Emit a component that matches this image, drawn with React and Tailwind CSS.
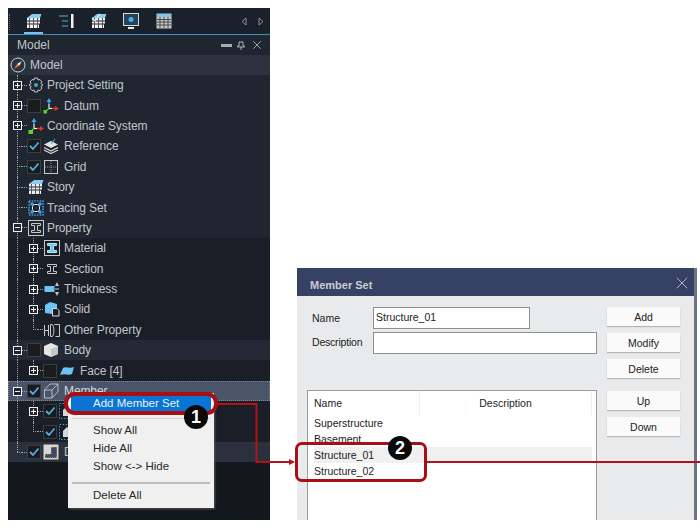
import { X } from "lucide-react";

function Floors({ check }) {
  return (
    <svg width="16" height="16" viewBox="0 0 16 16" fill="none">
      <path d="M1 5 L6 1 H15.5 L14 5 Z" fill="#86ccf4" />
      <path d="M1 5 H14 V7.5 H1 Z M1 8.5 H14 V10.5 H1 Z M1 11.5 H13 V15 H1 Z" fill="#f0f0f0" />
      <path d="M3.5 5 V15 M7.5 5 V15 M11.5 5 V15" stroke="#555" strokeWidth="1" />
      {check && <path d="M1 5 L4 8 L9 1" stroke="#dfe3e6" strokeWidth="1.4" />}
    </svg>
  );
}

function Axes({ small }) {
  return (
    <svg width="16" height="16" viewBox="0 0 16 16" fill="none">
      <path d="M6 10.5 V6" stroke="#f0f0f0" strokeWidth="1.2" />
      <path d="M6 6 V3" stroke="#35a9e6" strokeWidth="1.4" />
      <path d="M6 0 L3.5 4 H8.5 Z" fill="#35a9e6" />
      <path d="M6 10.5 H9" stroke="#f0f0f0" strokeWidth="1.2" />
      <path d="M9 10.5 H13" stroke="#e8352b" strokeWidth="1.4" />
      <path d="M16 10.5 L12 8 V13 Z" fill="#e8352b" />
      <path d="M6 10.5 L3 13" stroke="#58d030" strokeWidth="1.2" />
      <rect x="0.5" y="12" width={small ? 3.5 : 4.5} height={small ? 3.5 : 4} fill="#58d030" />
    </svg>
  );
}

function Gear() {
  return (
    <svg width="16" height="16" viewBox="0 0 16 16" fill="none">
      <path d="M6.5 1 H9.5 L10 3 L12 2.5 L14 5 L12.8 6.5 L15 8 L12.8 9.5 L14 11 L12 13.5 L10 13 L9.5 15 H6.5 L6 13 L4 13.5 L2 11 L3.2 9.5 L1 8 L3.2 6.5 L2 5 L4 2.5 L6 3 Z" stroke="#c4c8cc" strokeWidth="1" />
      <circle cx="8" cy="8" r="2" fill="#4a9fd6" />
    </svg>
  );
}

function RefIcon() {
  return (
    <svg width="16" height="16" viewBox="0 0 16 16" fill="none">
      <path d="M1 6.5 L8 3 L15 6.5 L8 10 Z" fill="#e4e4e4" />
      <path d="M1 9.5 L8 13 L15 9.5 M1 12 L8 15.5 L15 12" stroke="#d8d8d8" strokeWidth="1.2" />
      <path d="M8 6 L12 1" stroke="#35a9e6" strokeWidth="1.2" />
    </svg>
  );
}

function GridIcon() {
  return (
    <svg width="16" height="16" viewBox="0 0 16 16" fill="none">
      <rect x="1.5" y="1.5" width="13" height="13" stroke="#c8c8c8" />
      <path d="M8 2 V14 M2 8 H14" stroke="#8a8f94" strokeDasharray="1 1" />
    </svg>
  );
}

function Tracing() {
  return (
    <svg width="16" height="16" viewBox="0 0 16 16" fill="none">
      <rect x="1" y="1" width="14" height="14" stroke="#3fa4e6" strokeWidth="1.6" strokeDasharray="1.5 1.2" />
      <rect x="4.5" y="4.5" width="7" height="7" rx="2" stroke="#e4eef4" />
      <rect x="2.5" y="2.5" width="3" height="3" fill="#3fa4e6" />
      <rect x="10.5" y="2.5" width="3" height="3" fill="#3fa4e6" />
      <rect x="2.5" y="10.5" width="3" height="3" fill="#3fa4e6" />
      <rect x="10.5" y="10.5" width="3" height="3" fill="#3fa4e6" />
    </svg>
  );
}

function Beam({ fill, box }) {
  return (
    <svg width="16" height="16" viewBox="0 0 16 16" fill="none">
      {box && <rect x="0.5" y="0.5" width="15" height="15" stroke="#c8c8c8" />}
      <path d="M3.5 3.5 H12.5 V5.5 H9.5 V10.5 H12.5 V12.5 H3.5 V10.5 H6.5 V5.5 H3.5 Z" fill={fill || "none"} stroke={fill ? "#b8e8ff" : "#c8c8c8"} />
    </svg>
  );
}

function Thick() {
  return (
    <svg width="16" height="16" viewBox="0 0 16 16" fill="none">
      <rect x="0.5" y="5" width="10" height="6" fill="#6cc4f4" />
      <path d="M13 1 L15 5 H11 Z M13 15 L11 11 H15 Z" fill="#c8c8c8" />
      <path d="M11 8 H15" stroke="#c8c8c8" />
    </svg>
  );
}

function Solid() {
  return (
    <svg width="16" height="16" viewBox="0 0 16 16" fill="none">
      <path d="M1 4 L6 1 L13 3 V7 H8 V13 L1 12 Z" fill="#6cc4f4" />
      <path d="M8.5 7.5 H13 L15 9.5 V15 H8.5 Z" stroke="#dcdcdc" />
    </svg>
  );
}

function Other() {
  return (
    <svg width="16" height="16" viewBox="0 0 16 16" fill="none">
      <path d="M0.5 3 V14 M4.5 3 V14 M0.5 8.5 H4.5 M6.5 2.5 H8 C10.5 2.5 10.5 14.5 8 14.5 H6.5 Z M10.5 2.5 H15.5 V14.5 H11.5" stroke="#c8c8c8" />
    </svg>
  );
}

function BodyIcon() {
  return (
    <svg width="16" height="16" viewBox="0 0 16 16">
      <path d="M8 1 L15 4 V12 L8 15 L1 12 V4 Z" fill="#e6e6e6" />
      <path d="M8 7 L15 4 V12 L8 15 Z" fill="#c6c6c6" />
    </svg>
  );
}

function Face() {
  return (
    <svg width="16" height="16" viewBox="0 0 16 16">
      <path d="M4 5 C7 3 10 6 15 4 L13 11 C9 13 6 10 1 12 Z" fill="#6cc4f4" />
    </svg>
  );
}

function Wire() {
  return (
    <svg width="16" height="16" viewBox="0 0 16 16" fill="none">
      <path d="M1.5 7 L7 1 H15 V8.5 L9 15 H1.5 Z M1.5 7 H9 V15 M9 7 L15 1" stroke="#d0d3d6" strokeWidth="0.8" />
    </svg>
  );
}

function SetIcon() {
  return (
    <svg width="16" height="16" viewBox="0 0 16 16" fill="none">
      <rect x="0.5" y="0.5" width="15" height="15" stroke="#3f9ad6" strokeDasharray="1.5 1.5" />
      <path d="M4 7 L8 3 L12 7 V13 H4 Z" fill="#d8d8d8" />
    </svg>
  );
}

function Display() {
  return (
    <svg width="16" height="16" viewBox="0 0 16 16" fill="none">
      <rect x="0.5" y="0.5" width="15" height="15" fill="#d8d8d8" />
      <path d="M2 14 V10 H8 V3 H14 V14 Z" fill="#3a4a70" stroke="#d4c84a" strokeDasharray="1 1" />
    </svg>
  );
}

function Row({ level = 0, exp, check, icon, label, bg = "", main, sub, dim }) {
  return (
    <div className={`relative h-[20.4px] flex items-center ${bg}`}>
      {main && (
        <div
          className={`absolute left-[9px] w-0 border-l border-dotted border-[#a0a4a8] ${
            main === "end" ? "top-0 h-[10px]" : "top-0 bottom-0"
          }`}
        />
      )}
      {sub && (
        <div
          className={`absolute left-[25px] w-0 border-l border-dotted border-[#a0a4a8] ${
            sub === "end" ? "top-0 h-[10px]" : "top-0 bottom-0"
          }`}
        />
      )}
      <div className={level === 0 ? "w-[5px]" : "w-[21px]"} />
      <div className="relative w-[9px] h-[9px] flex items-center justify-center">
        {exp ? (
          <div className="relative z-10 w-[9px] h-[9px] border border-[#f0f0f0] bg-[#20262e] flex items-center justify-center">
            <div className="absolute w-[5px] h-px bg-[#f0f0f0]" />
            {exp === "+" && <div className="absolute h-[5px] w-px bg-[#f0f0f0]" />}
          </div>
        ) : (
          <div className="absolute left-[4px] right-0 border-t border-dotted border-[#a0a4a8]" />
        )}
      </div>
      <div className="w-[5px] border-t border-dotted border-[#a0a4a8]" />
      {check !== undefined && (
        <div className="w-[14px] h-[14px] mr-[2px] bg-[#1b1b1d] border border-[#3a3d42] flex items-center justify-center">
          {check && (
            <svg width="12" height="12" viewBox="0 0 12 12" fill="none">
              <path d="M2 6 L5 9 L10.5 2.5" stroke="#4ab0ea" strokeWidth="1.8" />
            </svg>
          )}
        </div>
      )}
      <div className={`w-4 h-4 shrink-0 ${check === undefined ? "ml-px" : ""}`}>{icon}</div>
      {label && (
        <span
          className={`${check !== undefined ? "ml-[5px]" : level === 1 ? "ml-1" : "ml-[3px]"} text-[12px] tracking-[-0.1px] leading-none whitespace-nowrap ${
            dim ? "text-[#d4d7da]" : "text-[#c0c4c9]"
          }`}
        >
          {label}
        </span>
      )}
    </div>
  );
}

function Btn({ children, className = "" }) {
  return (
    <div className={`w-[73px] h-[19px] pt-[2px] bg-[#fafafa] shadow-[0_1px_1px_#b4b6b8] flex items-center justify-center text-[10.5px] text-[#222] ${className}`}>
      {children}
    </div>
  );
}

export default function App() {
  return (
    <div className="relative w-[700px] h-[530px] bg-white flex items-start overflow-hidden font-['Liberation_Sans','Noto_Sans',sans-serif]">
      {/* Left panel: model tree */}
      <div className="ml-2 mt-2 w-[262px] h-[512px] bg-[#14181e] flex flex-col">
        {/* Toolbar */}
        <div className="relative h-[27px] bg-[#1b212a] border-b border-[#3d8fc4] flex items-center shrink-0">
          <div className="absolute left-px top-[6px] h-[16px] w-0 border-l border-dotted border-[#6a7078]" />
          <div className="flex items-center gap-[16.4px] pl-[18px]">
            <div className="relative">
              <Floors />
              <div className="absolute left-[-2px] top-[19px] w-[19px] h-[2px] bg-[#7cc4ee]" />
            </div>
            <svg width="16" height="16" viewBox="0 0 16 16" fill="none">
              <path d="M1 3 H10 M4 8 H10 M4 13 H10" stroke="#4ab0ea" strokeWidth="1.2" />
              <rect x="13" y="1" width="2.5" height="14" fill="#f0f0f0" />
            </svg>
            <Floors check />
            <svg width="16" height="16" viewBox="0 0 16 16" fill="none">
              <rect x="0.5" y="0.5" width="15" height="12" fill="#23435a" stroke="#d8d8d8" />
              <circle cx="8" cy="6.5" r="2.5" fill="#4ab0ea" />
              <path d="M5 15 H11" stroke="#e8e8e8" strokeWidth="2" />
            </svg>
            <svg width="16" height="16" viewBox="0 0 16 16" fill="none">
              <rect x="0.5" y="0.5" width="15" height="15" fill="#c8c8c8" />
              <rect x="1" y="1" width="14" height="3" fill="#7cc4ee" />
              <path d="M1 6.5 H15 M1 9 H15 M1 12 H15 M4 4 V15 M8 4 V15 M12 4 V15" stroke="#4a4a4a" />
            </svg>
          </div>
          <div className="ml-auto mr-[6px] flex items-center gap-[11px]">
            <svg width="6" height="9" viewBox="0 0 6 9" fill="none">
              <path d="M5 1 L1 4.5 L5 8 Z" stroke="#8a8f94" />
            </svg>
            <svg width="6" height="9" viewBox="0 0 6 9" fill="none">
              <path d="M1 1 L5 4.5 L1 8 Z" stroke="#8a8f94" />
            </svg>
          </div>
        </div>

        {/* Title */}
        <div className="h-[20px] bg-[#1f2630] flex items-center pl-[9px] pr-[6px] shrink-0">
          <span className="text-[12px] text-[#c0c4c9]">Model</span>
          <div className="ml-auto flex items-center gap-[5px] text-[#b0b4b8]">
            <div className="w-[11px] h-[3px] bg-[#a8acb0]" />
            <svg width="8" height="9" viewBox="0 0 8 9" fill="none">
              <path d="M2 1 H6 V5 H7.5 V6 H0.5 V5 H2 Z M4 6 V9" stroke="#b0b4b8" />
            </svg>
            <X size={14} strokeWidth={1.5} />
          </div>
        </div>

        {/* Tree */}
        <div className="relative h-[20px] bg-[#2c333e] flex items-center pl-[2px] shrink-0">
          <svg width="16" height="16" viewBox="0 0 16 16" fill="none">
            <circle cx="8" cy="8" r="7" stroke="#d0d3d6" />
            <path d="M12 4 L9 9 L7 7 Z" fill="#f0f0f0" />
            <path d="M4 12 L9 9 L7 7 Z" fill="#ef6a2a" />
          </svg>
          <span className="ml-[4px] text-[12px] text-[#c0c4c9]">Model</span>
        </div>
        <div className="bg-[#1f2630]">
          <Row main="full" exp="+" icon={<Gear />} label="Project Setting" />
          <Row main="full" exp="+" check={false} icon={<Axes small />} label="Datum" />
          <Row main="full" exp="+" icon={<Axes />} label="Coordinate System" />
          <Row main="full" check icon={<RefIcon />} label="Reference" />
          <Row main="full" check icon={<GridIcon />} label="Grid" />
          <Row main="full" icon={<Floors />} label="Story" />
          <Row main="full" icon={<Tracing />} label="Tracing Set" />
          <Row main="full" exp="-" icon={<Beam box />} label="Property" />
        </div>
        <div className="bg-[#1a1f27]">
          <Row main="full" sub="full" level={1} exp="+" icon={<Beam box fill="#6cc4f4" />} label="Material" />
          <Row main="full" sub="full" level={1} exp="+" icon={<Beam />} label="Section" />
          <Row main="full" sub="full" level={1} exp="+" icon={<Thick />} label="Thickness" />
          <Row main="full" sub="full" level={1} exp="+" icon={<Solid />} label="Solid" />
          <Row main="full" sub="end" level={1} icon={<Other />} label="Other Property" />
        </div>
        <Row main="full" bg="bg-[#232a35]" exp="-" check={false} icon={<BodyIcon />} label="Body" />
        <Row main="full" sub="end" bg="bg-[#1a1f27]" level={1} exp="+" check={false} icon={<Face />} label="Face [4]" />
        <Row main="full" bg="bg-[#4b5569] outline outline-1 -outline-offset-1 outline-dotted outline-[#7d8594]" exp="-" check icon={<Wire />} label="Member" dim />
        <div className="bg-[#1a1f27]">
          <Row main="full" sub="full" level={1} exp="+" check icon={<SetIcon />} />
          <Row main="full" sub="end" level={1} check icon={<SetIcon />} />
        </div>
        <Row main="end" bg="bg-[#2a313c]" check icon={<Display />} label="D" />
      </div>

      {/* Right panel: member set dialog */}
      <div className="ml-[27px] mt-[268px] w-[400px] h-[252px] bg-[#e9eaec] border-r-[3px] border-[#6d7488] flex flex-col overflow-hidden shrink-0">
        <div className="h-[28px] bg-[#364263] flex items-center pl-[13px] pr-[2px] shrink-0">
          <span className="pt-[7px] text-[11px] font-bold text-[#c9ccd4]">Member Set</span>
          <X size={20} strokeWidth={0.9} className="ml-auto mt-px text-[#d8dbe2]" />
        </div>
        <div className="flex pt-[11px]">
          <div className="w-[300px] pl-[10px] shrink-0">
            <div className="flex items-center h-[22px]">
              <span className="w-[66px] pl-[5px] pt-[2px] text-[10.5px] text-[#222]">Name</span>
              <div className="w-[157px] h-[22px] bg-white border border-[#8c8e90] pl-[2px] text-[10.5px] leading-[18px] text-[#222]">
                Structure_01
              </div>
            </div>
            <div className="flex items-center h-[22px] mt-[3px]">
              <span className="w-[66px] pl-[5px] text-[10.5px] text-[#222] tracking-[-0.2px]">Description</span>
              <div className="w-[224px] h-[22px] bg-white border border-[#8c8e90]" />
            </div>
            {/* Member set list */}
            <div className="mt-[36px] w-[290px] h-[140px] bg-white border border-[#9a9c9e] pl-[6px] pr-[4px] text-[10.5px] text-[#222]">
              <div className="flex h-[24px] items-center">
                <span className="w-[105px] h-full pt-[2px] flex items-center">Name</span>
                <span className="w-[173px] h-full pt-[2px] flex items-center justify-center border-l border-r border-[#efefef]">Description</span>
              </div>
              <div className="h-4 leading-4">Superstructure</div>
              <div className="h-4 leading-4">Basement</div>
              <div className="h-4 leading-4 bg-[#f0f0f0]">Structure_01</div>
              <div className="h-4 leading-4">Structure_02</div>
            </div>
          </div>
          <div className="ml-[10px] flex flex-col">
            <Btn>Add</Btn>
            <Btn className="mt-[7px]">Modify</Btn>
            <Btn className="mt-[7px]">Delete</Btn>
            <Btn className="mt-[13px]">Up</Btn>
            <Btn className="mt-[7px]">Down</Btn>
          </div>
        </div>
      </div>

      {/* Context menu over the tree */}
      <div className="absolute left-[68px] top-[393px] w-[146px] h-[115px] bg-[#f0f0f0] shadow-[1px_1px_2px_#555] text-[11.5px] text-[#2a2a2a] pt-[2px] px-[3px]">
        <div className="h-[16px] bg-[#0a74d4] text-[#e8f2fb] leading-[16px] pl-[22px]">Add Member Set</div>
        <div className="mt-[7px] mx-[1px] h-px bg-[#d0d0d0]" />
        <div className="mt-[2px] h-[18px] leading-[18px] pl-[22px]">Show All</div>
        <div className="h-[18px] leading-[18px] pl-[22px]">Hide All</div>
        <div className="h-[18px] leading-[18px] pl-[22px]">Show &lt;-&gt; Hide</div>
        <div className="mt-[7px] mx-[1px] h-[2px] bg-[#bdbdbd]" />
        <div className="mt-[2px] h-[18px] leading-[18px] pl-[22px]">Delete All</div>
      </div>

      {/* Callouts */}
      <div className="absolute left-[64px] top-[392px] w-[154px] h-[23px] rounded-[11px] border-[4px] border-[#a80f14]" />
      <div className="absolute left-[295px] top-[442px] w-[132px] h-[40px] rounded-[7px] border-[3px] border-[#a80f14]" />
      <svg className="absolute left-0 top-0 pointer-events-none" width="700" height="530" fill="none">
        <path d="M217 404 H256.5 V462 H290" stroke="#b3121a" strokeWidth="2" />
        <path d="M295 462 L289 459 V465 Z" fill="#b3121a" />
        <path d="M427 462 H700" stroke="#b3121a" strokeWidth="2" />
      </svg>
      <div className="absolute left-[184px] top-[405px] w-6 h-6 rounded-full bg-[#0a0a0a] flex items-center justify-center text-white text-[18px] font-bold">1</div>
      <div className="absolute left-[388px] top-[436px] w-6 h-6 rounded-full bg-[#0a0a0a] flex items-center justify-center text-white text-[18px] font-bold">2</div>
    </div>
  );
}
